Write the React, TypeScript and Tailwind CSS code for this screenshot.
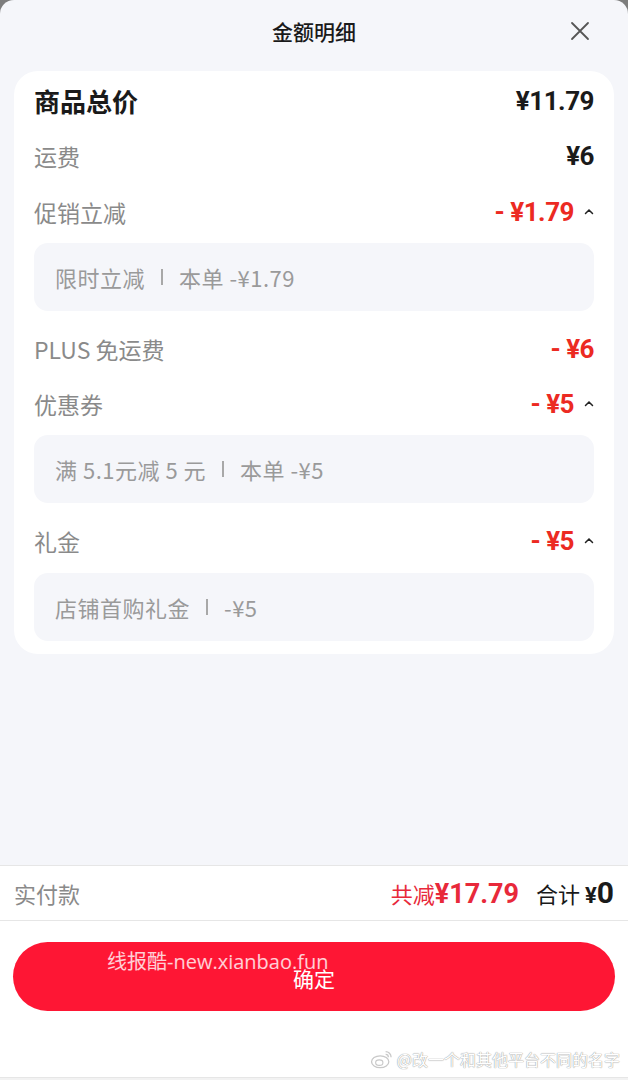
import React from "react";

const cjk = "font-['Noto_Sans_CJK_SC',sans-serif]";
const num = "font-['Roboto','Noto_Sans_CJK_SC',sans-serif]";

function Chevron() {
  return (
    <svg width="10" height="7" viewBox="0 0 10 7" className="ml-[10px] mb-[2px]">
      <path d="M1.5 5.5 L5 2 L8.5 5.5" fill="none" stroke="#222" strokeWidth="1.5" strokeLinecap="round" />
    </svg>
  );
}

function Row({
  label,
  amount,
  bold,
  red,
  chevron,
  className,
}: {
  label: string;
  amount: string;
  bold?: boolean;
  red?: boolean;
  chevron?: boolean;
  className?: string;
}) {
  return (
    <div className={`flex h-[32px] items-center justify-between ${className ?? ""}`}>
      <span
        className={`${cjk} leading-none ${
          bold ? "text-[26px] font-bold text-[#1a1a1a]" : "text-[23px] text-[#8a8a8a]"
        }`}
      >
        {label}
      </span>
      <div className="flex items-center">
        <span
          className={`${num} text-[26px] font-bold leading-none tracking-[-0.5px] ${
            red ? "text-[#ec2a22]" : "text-[#1a1a1a]"
          }`}
        >
          {amount}
        </span>
        {chevron && <Chevron />}
      </div>
    </div>
  );
}

function Detail({ main, rest, className }: { main: string; rest: string; className?: string }) {
  return (
    <div
      className={`flex h-[68px] items-center rounded-[14px] bg-[#f5f6fa] pl-[21px] ${cjk} text-[22px] leading-none text-[#9a9a9a] ${
        className ?? ""
      }`}
    >
      <span className="tracking-[0.5px]">{main}</span>
      <span className="mx-[16px] h-[16px] w-[2px] bg-[#a8a8a8]" />
      <span className="tracking-[0.5px]">{rest}</span>
    </div>
  );
}

export default function App() {
  return (
    <div className="h-[1080px] w-full bg-[#7d7d7d]">
      <div className="relative flex h-[1080px] flex-col overflow-hidden rounded-t-[14px] bg-[#f5f6fa]">
        {/* Header */}
        <div className="relative flex h-[62px] items-center justify-center">
          <span className={`${cjk} text-[21px] font-medium leading-none text-[#1a1a1a]`}>金额明细</span>
          <svg width="20" height="20" viewBox="0 0 20 20" className="absolute right-[38px] top-[21px]">
            <path d="M2 2 L18 18 M18 2 L2 18" stroke="#555" strokeWidth="1.8" strokeLinecap="round" />
          </svg>
        </div>

        {/* Card */}
        <div className="px-[14px] pt-[9px]">
          <div className="rounded-[24px] bg-white px-[20px] pb-[13px] pt-[14px]">
            <Row label="商品总价" amount="¥11.79" bold />
            <Row label="运费" amount="¥6" className="mt-[23px]" />
            <Row label="促销立减" amount="- ¥1.79" red chevron className="mt-[24px]" />
            <Detail main="限时立减" rest="本单 -¥1.79" className="mt-[15px]" />
            <Row label="PLUS 免运费" amount="- ¥6" red className="mt-[22px]" />
            <Row label="优惠券" amount="- ¥5" red chevron className="mt-[23px]" />
            <Detail main="满 5.1元减 5 元" rest="本单 -¥5" className="mt-[15px]" />
            <Row label="礼金" amount="- ¥5" red chevron className="mt-[22px]" />
            <Detail main="店铺首购礼金" rest="-¥5" className="mt-[16px]" />
          </div>
        </div>

        <div className="flex-1" />

        {/* Footer */}
        <div className="h-[215px] border-t border-[#e6e6e6] bg-white">
          <div className="flex h-[55px] items-center justify-between border-b border-[#e6e6e6] pl-[14px] pr-[14px]">
            <span className={`${cjk} text-[22px] leading-none text-[#8a8a8a]`}>实付款</span>
            <div className="flex items-baseline">
              <span className={`${cjk} text-[22px] leading-none text-[#e8293a]`}>共减</span>
              <span className={`${num} text-[27px] font-bold leading-none text-[#e8293a]`}>¥17.79</span>
              <span className={`${cjk} ml-[17px] text-[22px] leading-none text-[#1a1a1a]`}>合计</span>
              <span className={`${num} ml-[5px] text-[22px] font-bold leading-none text-[#1a1a1a]`}>¥</span>
              <span className={`${num} text-[30px] font-bold leading-none text-[#1a1a1a]`}>0</span>
            </div>
          </div>
          <div className="px-[13px] pt-[21px]">
            <div className="relative flex h-[69px] items-center justify-center rounded-full bg-[#fe1634]">
              <span className={`${cjk} mt-[4px] text-[21px] leading-none text-white`}>确定</span>
              <span
                className={`absolute left-[94px] top-[10px] font-['Open_Sans','Noto_Sans_CJK_SC',sans-serif] text-[20px] leading-none text-white/80`}
              >
                线报酷-new.xianbao.fun
              </span>
            </div>
          </div>
          <div className="mt-[38px] flex items-center justify-end pr-[8px]">
            <svg width="24" height="20" viewBox="0 0 26 22" className="mr-[3px]">
              <ellipse cx="11" cy="14" rx="9.5" ry="6.5" fill="none" stroke="#c8c8c8" strokeWidth="1.4" />
              <ellipse cx="10" cy="15" rx="4" ry="3" fill="none" stroke="#c8c8c8" strokeWidth="1.2" />
              <path d="M17 3 A6 6 0 0 1 23 9 M17 6 A3 3 0 0 1 20 9" fill="none" stroke="#c8c8c8" strokeWidth="1.4" />
            </svg>
            <span
              className={`${cjk} text-[16px] leading-none text-white [text-shadow:0_0_1px_#9a9a9a,0_0_1px_#9a9a9a]`}
            >
              @改一个和其他平台不同的名字
            </span>
          </div>
        </div>
        <div className="absolute bottom-0 left-0 h-[3px] w-full border-t border-[#e6e6e6] bg-[#f2f2f2]" />
      </div>
    </div>
  );
}
